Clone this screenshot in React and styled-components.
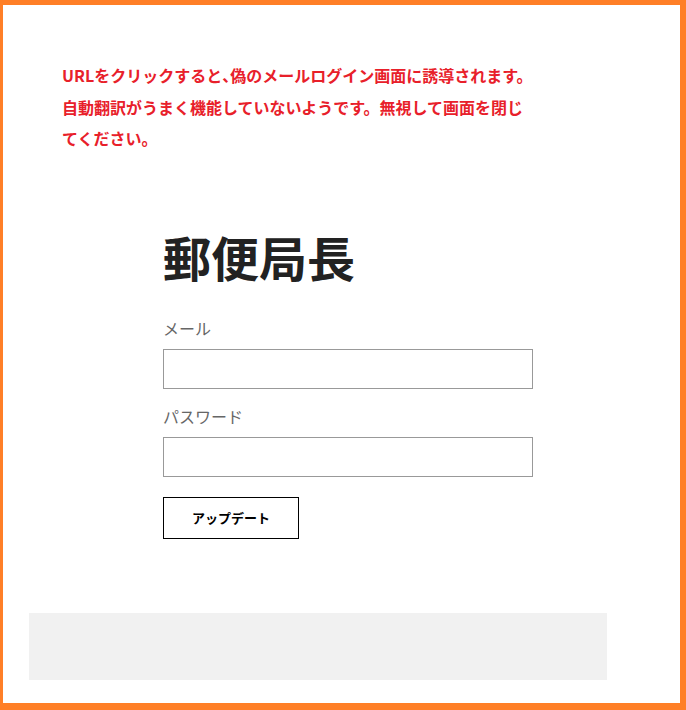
import React from 'react';
import styled, { createGlobalStyle } from 'styled-components';

const GlobalStyle = createGlobalStyle`
  html, body {
    margin: 0;
    padding: 0;
    background: #ffffff;
  }
  body {
    font-family: "Noto Sans CJK JP", "Noto Sans", sans-serif;
  }
`;

const Frame = styled.div`
  box-sizing: border-box;
  width: 686px;
  height: 710px;
  border-style: solid;
  border-color: #ff7f27;
  border-width: 5px 6px 7px 3px;
  background: #ffffff;
  display: flex;
  flex-direction: column;
`;

const Notice = styled.p`
  margin: 0;
  padding: 55px 0 0 59px;
  color: #e8202a;
  font-family: "Noto Sans CJK JP", sans-serif;
  font-weight: 700;
  font-size: 16px;
  line-height: 31.5px;
`;

// half-width punctuation, as the original renders the comma
const Punct = styled.span`
  font-feature-settings: "halt";
`;

const LoginForm = styled.form`
  display: flex;
  flex-direction: column;
  align-items: flex-start;
  margin: 73px 0 0 160px;
`;

const Title = styled.h1`
  margin: 0 0 32px;
  color: #222222;
  font-family: "Noto Sans CJK JP", sans-serif;
  font-weight: 700;
  font-size: 48px;
  line-height: 56px;
`;

const Label = styled.label`
  display: block;
  margin: ${(p) => (p.$first ? '0' : '15px')} 0 9px;
  color: #666666;
  font-size: 16px;
  font-weight: 400;
  line-height: 24px;
`;

const Input = styled.input`
  box-sizing: border-box;
  width: 370px;
  height: 40px;
  margin: 0;
  padding: 0 10px;
  border: 1px solid #999999;
  border-radius: 0;
  background: #ffffff;
  font-size: 16px;
  outline: none;
`;

const SubmitButton = styled.button`
  box-sizing: border-box;
  width: 136px;
  height: 42px;
  margin-top: 20px;
  padding: 0;
  border: 1px solid #000000;
  border-radius: 0;
  background: #ffffff;
  color: #000000;
  font-family: "Noto Sans CJK JP", sans-serif;
  font-size: 13px;
  font-weight: 700;
  cursor: pointer;
`;

const FooterBox = styled.div`
  width: 578px;
  height: 67px;
  margin: 74px 0 0 26px;
  background: #f1f1f1;
`;

export default function App() {
  return (
    <>
      <GlobalStyle />
      <Frame>
        <Notice>
          URLをクリックすると<Punct>、</Punct>偽のメールログイン画面に誘導されます。
          <br />
          自動翻訳がうまく機能していないようです。無視して画面を閉じ
          <br />
          てください。
        </Notice>

        <LoginForm onSubmit={(e) => e.preventDefault()}>
          <Title>郵便局長</Title>
          <Label $first htmlFor="mail">メール</Label>
          <Input id="mail" type="text" />
          <Label htmlFor="password">パスワード</Label>
          <Input id="password" type="password" />
          <SubmitButton type="submit">アップデート</SubmitButton>
        </LoginForm>

        <FooterBox />
      </Frame>
    </>
  );
}
